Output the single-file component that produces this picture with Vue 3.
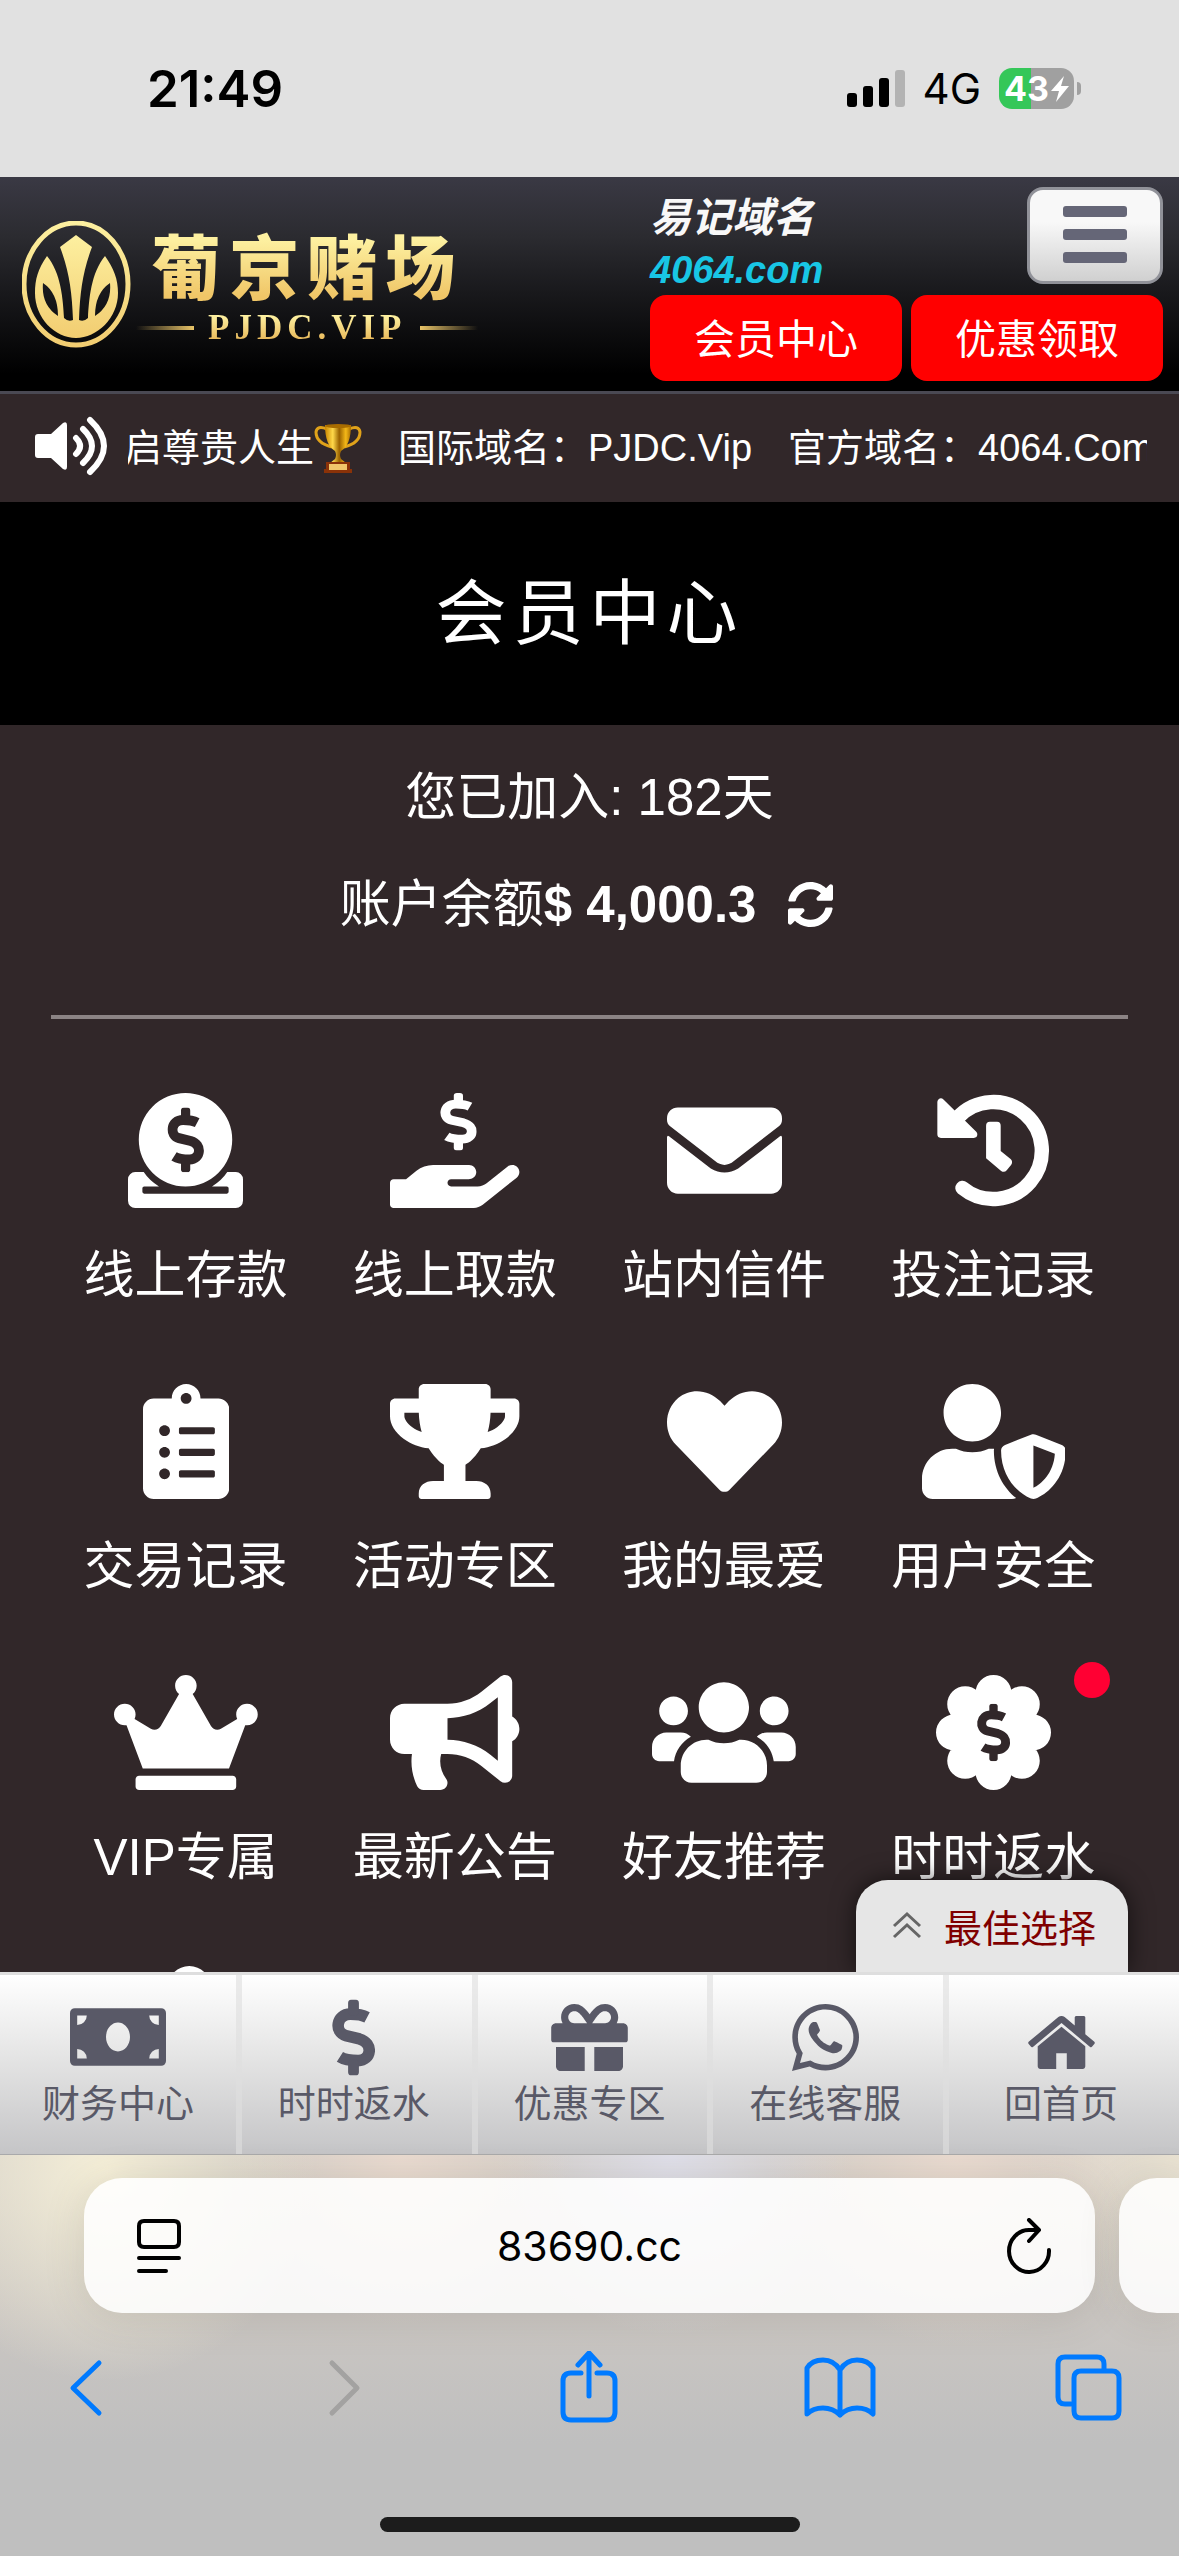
<script setup>
import { ref } from 'vue';

const address = ref('83690.cc');
const tickerShift = ref(-4);

const account = {
  days: 182,
  balance: '$ 4,000.3'
};

// icon paths are drawn on a 512 high grid, w is the grid width
const menu = [
  {
    label: '线上存款',
    w: 512,
    d: 'M256 0a208 208 0 1 1 0 416 208 208 0 1 1 0-416zM32 352H70Q95 390 138 416H72a8 8 0 0 0-8 8v16a8 8 0 0 0 8 8H440a8 8 0 0 0 8-8v-16a8 8 0 0 0-8-8H374Q417 390 442 352H480a32 32 0 0 1 32 32V480a32 32 0 0 1-32 32H32a32 32 0 0 1-32-32V384a32 32 0 0 1 32-32z',
    dollar: { x: 175, y: 64, width: 163, height: 289, cut: true }
  },
  {
    label: '线上取款',
    w: 576,
    d: 'M565.3 328.1c-11.8-10.7-30.2-10-42.6 0L430.3 402c-11.3 9.1-25.4 14-40 14H272c-8.8 0-16-7.2-16-16s7.2-16 16-16h78.3c15.9 0 30.7-10.9 33.3-26.6 3.3-20-12.1-37.4-31.6-37.4H192c-27 0-53.1 9.3-74.1 26.3L71.4 384H16c-8.8 0-16 7.2-16 16v96c0 8.8 7.2 16 16 16h356.8c14.5 0 28.6-4.9 40-14L564 377c15.2-12.1 16.4-35.3 1.3-48.9z',
    dollar: { x: 223, y: 0, width: 163, height: 256 }
  },
  {
    label: '站内信件',
    w: 512,
    d: 'M48 64H464a48 48 0 0 1 48 48V120q0 17-14 28L298 303q-20 17-42 17t-42-17L14 148Q0 137 0 120V112a48 48 0 0 1 48-48zM0 198q1-11 9-5L195 336q30 18 61 18t61-18L503 193q8-6 9 5V400a48 48 0 0 1-48 48H48a48 48 0 0 1-48-48z'
  },
  {
    label: '投注记录',
    w: 512,
    d: 'M240 128h32q16 0 16 18V258l44 36q12 12 3 25l-20 25q-11 12-25 3L223 290V146q0-18 17-18z',
    ring: 'M95 111A216 216 0 1 1 118 423',
    arrow: 'M22 40V184H168z'
  },
  {
    label: '交易记录',
    w: 384,
    d: 'M336 64h-80c0-35.3-28.7-64-64-64s-64 28.7-64 64H48C21.5 64 0 85.5 0 112v352c0 26.5 21.5 48 48 48h288c26.5 0 48-21.5 48-48V112c0-26.5-21.5-48-48-48zM96 424c-13.3 0-24-10.7-24-24s10.7-24 24-24 24 10.7 24 24-10.7 24-24 24zm0-96c-13.3 0-24-10.7-24-24s10.7-24 24-24 24 10.7 24 24-10.7 24-24 24zm0-96c-13.3 0-24-10.7-24-24s10.7-24 24-24 24 10.7 24 24-10.7 24-24 24zm96-192c13.3 0 24 10.7 24 24s-10.7 24-24 24-24-10.7-24-24 10.7-24 24-24zm128 368c0 4.4-3.6 8-8 8H168c-4.4 0-8-3.6-8-8v-16c0-4.4 3.6-8 8-8h144c4.4 0 8 3.6 8 8v16zm0-96c0 4.4-3.6 8-8 8H168c-4.4 0-8-3.6-8-8v-16c0-4.4 3.6-8 8-8h144c4.4 0 8 3.6 8 8v16zm0-96c0 4.4-3.6 8-8 8H168c-4.4 0-8-3.6-8-8v-16c0-4.4 3.6-8 8-8h144c4.4 0 8 3.6 8 8v16z'
  },
  {
    label: '活动专区',
    w: 576,
    d: 'M552 64H448V24c0-13.3-10.7-24-24-24H152c-13.3 0-24 10.7-24 24v40H24C10.7 64 0 74.7 0 88v56c0 35.7 22.5 72.4 61.9 100.7 31.5 22.7 69.8 37.1 110 41.7C203.3 338.5 240 360 240 360v72h-48c-35.3 0-64 20.7-64 56v12c0 6.6 5.4 12 12 12h296c6.6 0 12-5.4 12-12v-12c0-35.3-28.7-56-64-56h-48v-72s36.7-21.5 68.1-73.6c40.3-4.6 78.6-19 110-41.7 39.3-28.3 61.9-65 61.9-100.7V88c0-13.3-10.7-24-24-24zM99.3 192.8C74.9 175.2 64 155.6 64 144v-16h64.2c1 32.6 5.8 61.2 12.8 86.2-15.1-5.2-29.2-12.4-41.7-21.4zM512 144c0 16.1-17.7 36.1-35.3 48.8-12.5 9-26.7 16.2-41.8 21.4 7-25 11.8-53.6 12.8-86.2H512v16z'
  },
  {
    label: '我的最爱',
    w: 512,
    d: 'M462.3 62.6C407.5 15.9 326 24.3 275.7 76.2L256 96.5l-19.7-20.3C186.1 24.3 104.5 15.9 49.7 62.6c-62.8 53.6-66.1 149.8-9.9 207.9l193.5 199.8c12.5 12.9 32.8 12.9 45.3 0l193.5-199.8c56.3-58.1 53-154.3-9.8-207.9z'
  },
  {
    label: '用户安全',
    w: 640,
    d: 'M622.3 271.1l-115.2-45c-4.1-1.6-12.6-3.7-22.2 0l-115.2 45c-10.7 4.2-17.7 14-17.7 24.9 0 111.6 68.7 188.8 132.9 213.9 9.6 3.7 18 1.6 22.2 0C558.4 489.9 640 420.5 640 296c0-10.9-7-20.7-17.7-24.9zM496 462.4V273.3l95.5 37.3c-5.6 87.1-60.9 135.4-95.5 151.8zM224 256c70.7 0 128-57.3 128-128S294.7 0 224 0 96 57.3 96 128s57.3 128 128 128zm96 40c0-2.5.8-4.8 1.1-7.2-2.5-.1-4.9-.8-7.5-.8h-16.7c-22.2 10.2-46.9 16-72.9 16s-50.6-5.8-72.9-16h-16.7C60.2 288 0 348.2 0 422.4V464c0 26.5 21.5 48 48 48h352c6.8 0 13.3-1.5 19.2-4-54-42.9-99.2-116.7-99.2-212z'
  },
  {
    label: 'VIP专属',
    w: 640,
    d: 'M528 448H112c-8.8 0-16 7.2-16 16v32c0 8.8 7.2 16 16 16h416c8.8 0 16-7.2 16-16v-32c0-8.8-7.2-16-16-16zm64-320c-26.5 0-48 21.5-48 48 0 7.1 1.6 13.7 4.4 19.8L476 239.2c-15.4 9.2-35.3 4-44.2-11.6L350.3 85C361 76.2 368 63 368 48c0-26.5-21.5-48-48-48s-48 21.5-48 48c0 15 7 28.2 17.7 37l-81.5 142.6c-8.9 15.6-28.9 20.8-44.2 11.6l-72.3-43.4c2.7-6 4.4-12.7 4.4-19.8 0-26.5-21.5-48-48-48S0 149.5 0 176s21.5 48 48 48c2.6 0 5.2-.4 7.7-.8L128 416h384l72.3-192.8c2.5.4 5.1.8 7.7.8 26.5 0 48-21.5 48-48s-21.5-48-48-48z'
  },
  {
    label: '最新公告',
    w: 576,
    d: 'M576 240c0-23.6-13-44-32-55.1V32c0-8.7-7-32-32-32-7.1 0-14.2 2.4-20 7l-85 68C364.3 109.2 310.7 128 256 128H64c-35.4 0-64 28.7-64 64v96c0 35.4 28.7 64 64 64h33.7c-1.4 10.5-2.2 21.1-2.2 32 0 39.8 9.3 77.4 25.6 110.9 5.2 10.7 16.5 17.1 28.4 17.1h74.3c26.1 0 41.7-29.8 25.9-50.6-16.4-21.5-26.2-48.4-26.2-77.4 0-11.1 1.6-21.8 4.4-32H256c54.7 0 108.3 18.8 151 53l85 68a32 32 0 0 0 20 7c24.9 0 32-22.8 32-32V295.1c19.1-11.1 32-31.5 32-55.1zm-96 141.4L447 355C393 311.8 325.1 288 256 288v-96c69.1 0 137-23.8 191-67l33-26.4v282.8z'
  },
  {
    label: '好友推荐',
    w: 640,
    d: 'M96 224c35.3 0 64-28.7 64-64s-28.7-64-64-64-64 28.7-64 64 28.7 64 64 64zm448 0c35.3 0 64-28.7 64-64s-28.7-64-64-64-64 28.7-64 64 28.7 64 64 64zm32 32h-64c-17.6 0-33.5 7.1-45.1 18.6 40.3 22.1 68.9 62 75.1 109.4h66c17.7 0 32-14.3 32-32v-32c0-35.3-28.7-64-64-64zm-256 0c61.9 0 112-50.1 112-112S381.9 32 320 32 208 82.1 208 144s50.1 112 112 112zm76.8 32h-8.3c-20.8 10-43.9 16-68.5 16s-47.6-6-68.5-16h-8.3C179.6 288 128 339.6 128 403.2V432c0 26.5 21.5 48 48 48h288c26.5 0 48-21.5 48-48v-28.8c0-63.6-51.6-115.2-115.2-115.2zm-223.7-13.4C161.5 263.1 145.6 256 128 256H64c-35.3 0-64 28.7-64 64v32c0 17.7 14.3 32 32 32h65.9c6.3-47.4 34.9-87.3 75.2-109.4z'
  },
  {
    label: '时时返水',
    w: 512,
    d: 'M256 0a80 80 0 1 1 0 160 80 80 0 1 1 0-160zM256 352a80 80 0 1 1 0 160 80 80 0 1 1 0-160zM80 176a80 80 0 1 1 0 160 80 80 0 1 1 0-160zM432 176a80 80 0 1 1 0 160 80 80 0 1 1 0-160zM130 50a80 80 0 1 1 0 160 80 80 0 1 1 0-160zM382 50a80 80 0 1 1 0 160 80 80 0 1 1 0-160zM130 302a80 80 0 1 1 0 160 80 80 0 1 1 0-160zM382 302a80 80 0 1 1 0 160 80 80 0 1 1 0-160zM256 66a190 190 0 1 1 0 380 190 190 0 1 1 0-380z',
    dollar: { x: 182, y: 128, width: 148, height: 256, cut: true },
    dot: true
  },
  {
    label: '',
    w: 576,
    d: 'M304 0a96 96 0 0 1 96 96H208a96 96 0 0 1 96-96zM256 96H384c66 0 128 42 148 96h28a16 16 0 0 1 16 16V336a16 16 0 0 1-16 16h-36q-16 28-44 46V480a32 32 0 0 1-32 32H384a32 32 0 0 1-32-32V448H256v32a32 32 0 0 1-32 32H160a32 32 0 0 1-32-32V416Q64 368 64 288 64 120 256 96z'
  }
];

const tabs = [
  {
    label: '财务中心',
    size: [96, 58],
    box: '0 0 640 384',
    d: 'M608 0H32A32 32 0 0 0 0 32v320a32 32 0 0 0 32 32h576a32 32 0 0 0 32-32V32a32 32 0 0 0-32-32zM48 336v-64a64 64 0 0 1 64 64zM48 112V48h64a64 64 0 0 1-64 64zM320 288c-44 0-80-43-80-96s36-96 80-96 80 43 80 96-36 96-80 96zM592 336h-64a64 64 0 0 1 64-64zM592 112a64 64 0 0 1-64-64h64z'
  },
  { label: '时时返水', size: [43, 77], box: '0 0 163 289', dollar: true },
  {
    label: '优惠专区',
    size: [77, 67],
    box: '0 32 512 448',
    d: 'M32 448c0 17.7 14.3 32 32 32h160V320H32v128zm256 32h160c17.7 0 32-14.3 32-32V320H288v160zm192-320h-42.1c6.2-12.1 10.1-25.5 10.1-40 0-48.5-39.5-88-88-88-41.6 0-68.5 21.3-103 68.3-34.5-47-61.4-68.3-103-68.3-48.5 0-88 39.5-88 88 0 14.5 3.8 27.9 10.1 40H32c-17.7 0-32 14.3-32 32v80c0 8.8 7.2 16 16 16h480c8.8 0 16-7.2 16-16v-80c0-17.7-14.3-32-32-32zm-326.1 0c-22.1 0-40-17.9-40-40s17.9-40 40-40c19.9 0 34.6 3.3 86.1 80h-86.1zm206.1 0h-86.1c51.4-76.5 65.7-80 86.1-80 22.1 0 40 17.9 40 40s-17.9 40-40 40z'
  },
  {
    label: '在线客服',
    size: [67, 67],
    box: '0 32 448 448',
    d: 'M380.9 97.1C339 55.1 283.2 32 223.9 32c-122.4 0-222 99.6-222 222 0 39.1 10.2 77.3 29.6 111L0 480l117.7-30.9c32.4 17.7 68.9 27 106.1 27h.1c122.3 0 224.1-99.6 224.1-222 0-59.3-25.2-115-67.1-157zm-157 341.6c-33.2 0-65.7-8.9-94-25.7l-6.7-4-69.8 18.3L72 359.2l-4.4-7c-18.5-29.4-28.2-63.3-28.2-98.2 0-101.7 82.8-184.5 184.6-184.5 49.3 0 95.6 19.2 130.4 54.1 34.8 34.9 56.2 81.2 56.1 130.5 0 101.8-84.9 184.6-186.6 184.6zm101.2-138.2c-5.5-2.8-32.8-16.2-37.9-18-5.1-1.9-8.8-2.8-12.5 2.8-3.7 5.6-14.3 18-17.6 21.8-3.2 3.7-6.5 4.2-12 1.4-32.6-16.3-54-29.1-75.5-66-5.7-9.8 5.7-9.1 16.3-30.3 1.8-3.7.9-6.9-.5-9.7-1.4-2.8-12.5-30.1-17.1-41.2-4.5-10.8-9.1-9.3-12.5-9.5-3.2-.2-6.9-.2-10.6-.2-3.7 0-9.7 1.4-14.8 6.9-5.1 5.6-19.4 19-19.4 46.3 0 27.3 19.9 53.7 22.6 57.4 2.8 3.7 39.1 59.7 94.8 83.8 35.2 15.2 49 16.5 66.6 13.9 10.7-1.6 32.8-13.4 37.4-26.4 4.6-13 4.6-24.1 3.2-26.4-1.3-2.5-5-3.9-10.5-6.6z'
  },
  {
    label: '回首页',
    size: [67, 53],
    box: '89 253 1614 1283',
    d: 'M1472 992v480q0 26-19 45t-45 19h-384v-384h-256v384h-384q-26 0-45-19t-19-45v-480q0-1 .5-3t.5-3l575-474 575 474q1 2 1 6zm223-69l-62 74q-8 9-21 11h-3q-13 0-21-7l-692-577-692 577q-12 8-24 7-13-2-21-11l-62-74q-8-10-7-23.5t11-21.5l719-599q32-26 76-26t76 26l244 204v-195q0-14 9-23t23-9h192q14 0 23 9t9 23v408l219 182q10 8 11 21.5t-7 23.5z'
  }
];

const tools = [
  { name: '后退', d: ['M47 12L21 37L47 62'] },
  { name: '前进', d: ['M29 12L54 37L29 62'], off: true },
  { name: '分享', d: ['M28 22H18Q10 22 10 30V61Q10 69 18 69H54Q62 69 62 61V30Q62 22 54 22H44', 'M36 45V3M25 14L36 2L47 14'] },
  { name: '书签', d: ['M36 19Q30 9 19 9T3 17V63Q9 57 19 57T36 64Q43 57 53 57T69 63V17Q64 9 53 9T36 19V64'] },
  { name: '标签页', d: ['M17 53H11Q4 53 4 46V13Q4 6 11 6H43Q50 6 50 13V18', 'M27 20H58Q65 20 65 27V60Q65 67 58 67H27Q20 67 20 60V27Q20 20 27 20Z'] }
];
</script>

<template>
  <div class="screen">
    <svg class="defs" aria-hidden="true">
      <symbol id="dollar" viewBox="0 0 163 289" preserveAspectRatio="none">
        <path
          d="M133 68C114 58 99 56 70 56C14 56 9 126 52 137L104 150C159 166 149 232 99 232C69 232 49 230 30 218"
          fill="none"
          stroke="currentColor"
          stroke-width="44"
        />
        <rect x="61" y="0" width="41" height="60" rx="14" fill="currentColor" />
        <rect x="61" y="229" width="41" height="60" rx="14" fill="currentColor" />
      </symbol>
      <linearGradient id="gold" x1="0" y1="0" x2="0" y2="1">
        <stop offset="0" stop-color="#fdf0a0" />
        <stop offset="1" stop-color="#f2cd71" />
      </linearGradient>
      <linearGradient id="cup" x1="0" y1="0" x2="1" y2="0">
        <stop offset="0" stop-color="#c98500" />
        <stop offset="0.3" stop-color="#ffd84a" />
        <stop offset="0.55" stop-color="#9a6200" />
        <stop offset="0.8" stop-color="#f4b818" />
        <stop offset="1" stop-color="#a86c00" />
      </linearGradient>
    </svg>

    <div class="status">
      <span class="time">21:49</span>
      <div class="status-right">
        <svg width="58" height="38" viewBox="0 0 58 38" aria-hidden="true">
          <rect x="0" y="23" width="10" height="14" rx="3" />
          <rect x="16" y="16" width="10" height="21" rx="3" />
          <rect x="32" y="8" width="10" height="29" rx="3" />
          <rect x="48" y="0" width="10" height="37" rx="3" fill="#b3b3b3" />
        </svg>
        <span class="network">4G</span>
        <div class="battery">
          <span>43</span>
          <svg width="18" height="26" viewBox="0 0 18 26" aria-hidden="true">
            <path d="M13 0L0 15H8L5 26L18 10H10z" fill="#fff" />
          </svg>
        </div>
      </div>
    </div>

    <header class="header">
      <a class="logo" href="#">
        <svg width="109" height="127" viewBox="0 0 109 127" aria-hidden="true">
          <ellipse cx="54" cy="63" rx="52" ry="61" fill="none" stroke="url(#gold)" stroke-width="5" />
          <path
            fill="url(#gold)"
            fill-rule="evenodd"
            d="M25 35C39 52 41 78 42 97Q46 101 51 99C50 70 47 50 38 26L54 14L70 26C61 50 58 70 57 99Q62 101 66 97C67 78 69 52 83 35C92 48 96 58 96 72C96 97 75 117 54 117C33 117 13 97 13 72C13 58 16 48 25 35ZM21 62Q19 84 36 95Q36 72 21 62ZM88 62Q73 72 73 95Q90 84 88 62Z"
          />
        </svg>
        <div class="logo-text">
          <strong class="logo-name">葡京赌场</strong>
          <div class="logo-sub"><span>PJDC.VIP</span></div>
        </div>
      </a>
      <div class="header-side">
        <div class="header-top">
          <div class="domain">
            <div class="domain-title">易记域名</div>
            <div class="domain-name">4064.com</div>
          </div>
          <button class="menu-btn" aria-label="菜单"><i></i><i></i><i></i></button>
        </div>
        <div class="header-links">
          <button class="red-btn">会员中心</button>
          <button class="red-btn">优惠领取</button>
        </div>
      </div>
    </header>

    <div class="notice">
      <svg class="speaker" width="73" height="60" viewBox="0 0 73 60" aria-hidden="true">
        <path d="M3 18H16L28 7Q32 5 32 9V51Q32 55 28 53L16 42H3Q0 42 0 39V21Q0 18 3 18z" fill="#fff" />
        <path
          d="M41 22Q49 30 41 38M48 13Q66 30 48 47M55 4Q83 30 55 56"
          fill="none"
          stroke="#fff"
          stroke-width="6"
          stroke-linecap="round"
        />
      </svg>
      <div class="ticker">
        <div class="ticker-track" :style="{ marginLeft: tickerShift + 'px' }">
          <span class="ticker-item">
            启尊贵人生
            <svg width="48" height="50" viewBox="0 0 48 50" role="img" aria-label="奖杯">
              <path
                d="M13 6Q3 2 2 9Q2 20 18 24M35 6Q45 2 46 9Q46 20 30 24"
                fill="none"
                stroke="#e0a21a"
                stroke-width="3"
              />
              <path d="M11 2H37Q37 22 27 28Q25 32 27 36L32 40H16L21 36Q23 32 21 28Q11 22 11 2z" fill="url(#cup)" />
              <ellipse cx="24" cy="3" rx="13" ry="2" fill="#a86c00" />
              <path d="M12 39H36V46H38V50H10V46H12z" fill="#8a3208" />
              <path d="M15 41H33V47H15z" fill="#f1c66a" />
            </svg>
          </span>
          <span class="ticker-item">国际域名：PJDC.Vip</span>
          <span class="ticker-item">官方域名：4064.Com</span>
        </div>
      </div>
    </div>

    <h1 class="title">会员中心</h1>

    <div class="content">
      <main class="panel">
        <p class="line">您已加入: {{ account.days }}天</p>
        <p class="line">
          账户余额<b>{{ account.balance }}</b>
          <button class="refresh" aria-label="刷新余额">
            <svg width="45" height="45" viewBox="8 8 496 496" aria-hidden="true">
              <path
                fill="#fff"
                d="M371 133C340 104 299 88 256 88c-78 0-144 53-163 127-1 5-6 9-12 9H24c-7 0-13-7-12-14C34 95 135 8 256 8c66 0 127 26 171 69L463 41C478 26 504 37 504 58V192c0 13-11 24-24 24H346c-21 0-32-26-17-41l42-42zM32 296h134c21 0 32 26 17 41l-42 42c31 29 72 45 115 45 77 0 144-53 163-127 1-5 6-9 12-9h57c7 0 13 7 12 14C478 417 377 504 256 504c-66 0-127-26-171-69L49 471C34 486 8 475 8 454V320c0-13 11-24 24-24z"
              />
            </svg>
          </button>
        </p>
        <hr class="divider" />
        <nav class="grid">
          <a v-for="(item, i) in menu" :key="i" class="cell" href="#">
            <svg class="cell-icon" :viewBox="`0 0 ${item.w} 512`" aria-hidden="true">
              <path :d="item.d" fill="currentColor" />
              <path
                v-if="item.ring"
                :d="item.ring"
                fill="none"
                stroke="currentColor"
                stroke-width="64"
                stroke-linecap="round"
              />
              <path
                v-if="item.arrow"
                :d="item.arrow"
                fill="currentColor"
                stroke="currentColor"
                stroke-width="32"
                stroke-linejoin="round"
              />
              <use
                v-if="item.dollar"
                href="#dollar"
                :class="{ cut: item.dollar.cut }"
                :x="item.dollar.x"
                :y="item.dollar.y"
                :width="item.dollar.width"
                :height="item.dollar.height"
              />
            </svg>
            <span class="cell-label">{{ item.label }}</span>
            <i v-if="item.dot" class="dot"></i>
          </a>
        </nav>
      </main>
      <button class="picks">
        <svg width="30" height="28" viewBox="0 0 30 28" aria-hidden="true">
          <path d="M2 15L15 3L28 15M2 26L15 14L28 26" fill="none" stroke="#666" stroke-width="3" />
        </svg>
        最佳选择
      </button>
    </div>

    <nav class="tabs">
      <a v-for="tab in tabs" :key="tab.label" class="tab" href="#">
        <span class="tab-icon">
          <svg :width="tab.size[0]" :height="tab.size[1]" :viewBox="tab.box" aria-hidden="true">
            <use v-if="tab.dollar" href="#dollar" width="163" height="289" />
            <path v-else :d="tab.d" fill="currentColor" fill-rule="evenodd" />
          </svg>
        </span>
        <span>{{ tab.label }}</span>
      </a>
    </nav>

    <footer class="browser">
      <div class="address-row">
        <div class="address">
          <button aria-label="页面设置">
            <svg width="46" height="56" viewBox="0 0 46 56" aria-hidden="true">
              <path
                d="M8 3H38Q43 3 43 8V24Q43 29 38 29H8Q3 29 3 24V8Q3 3 8 3zM3 40H43M3 53H30"
                fill="none"
                stroke="#000"
                stroke-width="4"
                stroke-linecap="round"
              />
            </svg>
          </button>
          <input v-model="address" type="text" aria-label="网址" />
          <button aria-label="重新加载">
            <svg width="46" height="56" viewBox="0 0 46 56" aria-hidden="true">
              <path
                d="M43 32A20 21 0 1 1 23 12H33M23 2L33 12L23 23"
                fill="none"
                stroke="#000"
                stroke-width="4"
                stroke-linecap="round"
                stroke-linejoin="round"
              />
            </svg>
          </button>
        </div>
        <div class="next-page"></div>
      </div>
      <div class="toolbar">
        <button v-for="tool in tools" :key="tool.name" :class="{ off: tool.off }" :aria-label="tool.name">
          <svg width="72" height="72" viewBox="0 0 72 72" aria-hidden="true">
            <path
              v-for="d in tool.d"
              :key="d"
              :d="d"
              fill="none"
              stroke="currentColor"
              stroke-width="5"
              stroke-linecap="round"
              stroke-linejoin="round"
            />
          </svg>
        </button>
      </div>
      <div class="home-bar"></div>
    </footer>
  </div>
</template>

<style>
body {
  margin: 0;
  background: #312729;
}
</style>

<style scoped>
.screen {
  display: flex;
  flex-direction: column;
  height: 100vh;
  overflow: hidden;
  font-family: 'Liberation Sans', 'Noto Sans CJK SC', sans-serif;
  font-size: 38px;
  color: #fff;
}

.defs {
  position: absolute;
  width: 0;
  height: 0;
}

svg {
  display: block;
  flex-shrink: 0;
}

button {
  padding: 0;
  border: 0;
  background: none;
  font: inherit;
  color: inherit;
  cursor: pointer;
}

a {
  color: inherit;
  text-decoration: none;
}

/* phone status bar */
.status {
  display: flex;
  align-items: center;
  justify-content: space-between;
  height: 177px;
  padding: 0 98px 0 147px;
  box-sizing: border-box;
  background: #e1e1e1;
  color: #000;
  font-family: Inter, sans-serif;
  flex-shrink: 0;
}

.time {
  font-size: 51px;
  font-weight: 600;
}

.status-right {
  display: flex;
  align-items: center;
  gap: 18px;
}

.network {
  font-size: 42px;
}

.battery {
  position: relative;
  display: flex;
  align-items: center;
  justify-content: center;
  gap: 2px;
  width: 75px;
  height: 41px;
  margin-right: 7px;
  border-radius: 13px;
  background: linear-gradient(to right, #35c759 43%, #a0a0a0 43%);
  color: #fff;
  font-size: 34px;
  font-weight: 700;
}

.battery::after {
  content: '';
  position: absolute;
  right: -7px;
  top: 14px;
  width: 4px;
  height: 13px;
  border-radius: 0 4px 4px 0;
  background: #a0a0a0;
}

/* site header */
.header {
  display: flex;
  justify-content: space-between;
  padding: 10px 16px 10px 22px;
  border-bottom: 3px solid #4a4953;
  background: linear-gradient(#3a3944, #2b2b30 28%, #18181b 55%, #000 92%);
  flex-shrink: 0;
}

.logo {
  display: flex;
  align-items: center;
  gap: 5px;
}

.logo-text {
  display: flex;
  flex-direction: column;
  align-items: center;
  gap: 4px;
  padding-top: 4px;
}

.logo-name {
  background: linear-gradient(#fdf0a0 20%, #f0c667 90%);
  background-clip: text;
  color: transparent;
  font-family: 'Noto Sans CJK SC', sans-serif;
  font-size: 70px;
  font-weight: 900;
  letter-spacing: 8px;
  line-height: 80px;
}

.logo-sub {
  display: flex;
  align-items: center;
  gap: 14px;
  line-height: 40px;
  font-family: 'Liberation Serif', serif;
  font-size: 35px;
  font-weight: 700;
  letter-spacing: 5px;
}

.logo-sub span {
  background: linear-gradient(#fdf0a0 20%, #e9b95a 80%);
  background-clip: text;
  color: transparent;
}

.logo-sub::before,
.logo-sub::after {
  content: '';
  width: 58px;
  height: 4px;
  background: linear-gradient(to right, transparent, #e9c468);
}

.logo-sub::after {
  background: linear-gradient(to left, transparent, #e9c468);
}

.header-top {
  display: flex;
  align-items: flex-start;
  justify-content: space-between;
  height: 108px;
}

.domain {
  padding-top: 5px;
  line-height: 52px;
  font-weight: 700;
  font-style: italic;
}

.domain-title {
  font-size: 41px;
  color: #f8f8f8;
}

.domain-name {
  color: #18c6e5;
}

.menu-btn {
  display: flex;
  flex-direction: column;
  align-items: center;
  gap: 12px;
  width: 136px;
  height: 97px;
  padding-top: 16px;
  box-sizing: border-box;
  border: 3px solid #919299;
  border-radius: 16px;
  background: linear-gradient(#f8f8f8 35%, #d0d0d0);
}

.menu-btn i {
  width: 64px;
  height: 11px;
  border-radius: 3px;
  background: #656677;
}

.header-links {
  display: flex;
  gap: 9px;
}

.red-btn {
  height: 86px;
  padding: 0 44px 4px;
  border-radius: 16px;
  background: #f00;
  font-size: 41px;
}

/* scrolling notice */
.notice {
  display: flex;
  align-items: center;
  gap: 20px;
  height: 108px;
  padding: 0 32px 0 35px;
  background: #312729;
  flex-shrink: 0;
}

.speaker {
  margin-bottom: 4px;
}

.ticker {
  flex: 1;
  min-width: 0;
  overflow: hidden;
}

.ticker-track {
  display: flex;
  gap: 36px;
  line-height: 56px;
  white-space: nowrap;
}

.ticker-item {
  display: flex;
  align-items: center;
  flex-shrink: 0;
}

.title {
  margin: 0;
  background: #000;
  font-size: 71px;
  font-weight: 400;
  letter-spacing: 6px;
  line-height: 223px;
  text-align: center;
  flex-shrink: 0;
}

/* member panel */
.content {
  position: relative;
  flex: 1;
  min-height: 0;
  overflow: hidden;
  background: #312729;
}

.panel {
  padding: 19px 51px 0;
}

.line {
  display: flex;
  align-items: center;
  justify-content: center;
  margin: 0;
  font-size: 51px;
  line-height: 107px;
  white-space: pre;
}

.refresh {
  margin: 0 20px 0 32px;
}

.divider {
  height: 4px;
  margin: 57px 0 0;
  border: 0;
  background: #8b8384;
}

.grid {
  display: grid;
  grid-template-columns: repeat(4, 1fr);
}

.cell {
  position: relative;
  display: flex;
  flex-direction: column;
  align-items: center;
  gap: 32px;
  padding-top: 74px;
}

.cell-icon {
  height: 115px;
}

.cut {
  color: #312729;
}

.cell-label {
  height: 70px;
  font-size: 51px;
  line-height: 72px;
}

.dot {
  position: absolute;
  top: 61px;
  right: 18px;
  width: 36px;
  height: 36px;
  border-radius: 50%;
  background: #ff0033;
}

.picks {
  position: absolute;
  right: 51px;
  bottom: 0;
  display: flex;
  align-items: center;
  gap: 22px;
  height: 92px;
  padding: 0 32px 2px 36px;
  border-radius: 32px 32px 0 0;
  background: #e6e6e6;
  box-shadow: 0 0 24px rgba(0, 0, 0, 0.6);
  color: #800000;
}

/* site tab bar */
.tabs {
  display: flex;
  border-top: 3px solid #dedede;
  border-bottom: 1px solid #a9a9ab;
  background: linear-gradient(#fff, #e2e2e2 50%, #c5c5c7);
  color: #595967;
  flex-shrink: 0;
}

.tab {
  position: relative;
  display: flex;
  flex: 1;
  flex-direction: column;
  align-items: center;
  height: 179px;
  line-height: 52px;
}

.tab + .tab::before {
  content: '';
  position: absolute;
  top: 0;
  bottom: 0;
  left: 0;
  width: 6px;
  background: rgba(223, 223, 223, 0.62);
}

.tab-icon {
  display: flex;
  align-items: center;
  height: 103px;
  padding-top: 21px;
  box-sizing: border-box;
}

.tab:last-child .tab-icon {
  padding-top: 32px;
}

/* browser controls */
.browser {
  padding: 23px 0 24px;
  background:
    radial-gradient(circle at 9% 4%, #f5efd8, transparent 210px),
    radial-gradient(circle at 34% 0, #eadbd0, transparent 170px),
    radial-gradient(circle at 57% 0, #e0e0ea, transparent 180px),
    radial-gradient(circle at 81% 0, #eadbd0, transparent 190px),
    radial-gradient(circle at 100% 0, #e9e2d2, transparent 170px),
    linear-gradient(#d4cfc8, #cac6c2 40%, #bfbfbf 72%);
  flex-shrink: 0;
}

.address-row {
  display: flex;
  gap: 24px;
  padding-left: 84px;
}

.address,
.next-page {
  height: 135px;
  background: rgba(255, 255, 255, 0.87);
  box-shadow: 0 4px 40px rgba(90, 80, 70, 0.16);
}

.address {
  display: flex;
  align-items: center;
  flex: 1;
  padding: 0 43px 0 52px;
  border-radius: 38px;
}

.address input {
  flex: 1;
  min-width: 0;
  padding: 0 9px 0 0;
  border: 0;
  outline: 0;
  background: none;
  color: #000;
  font-family: Inter, sans-serif;
  font-size: 41px;
  text-align: center;
}

.next-page {
  width: 60px;
  border-radius: 38px 0 0 38px;
}

.toolbar {
  display: flex;
  justify-content: space-between;
  padding: 38px 53px 94px 52px;
  color: #007aff;
}

.toolbar .off {
  color: #a3a2a1;
}

.home-bar {
  width: 420px;
  height: 15px;
  margin: 0 auto;
  border-radius: 8px;
  background: #1c1c1c;
}
</style>
